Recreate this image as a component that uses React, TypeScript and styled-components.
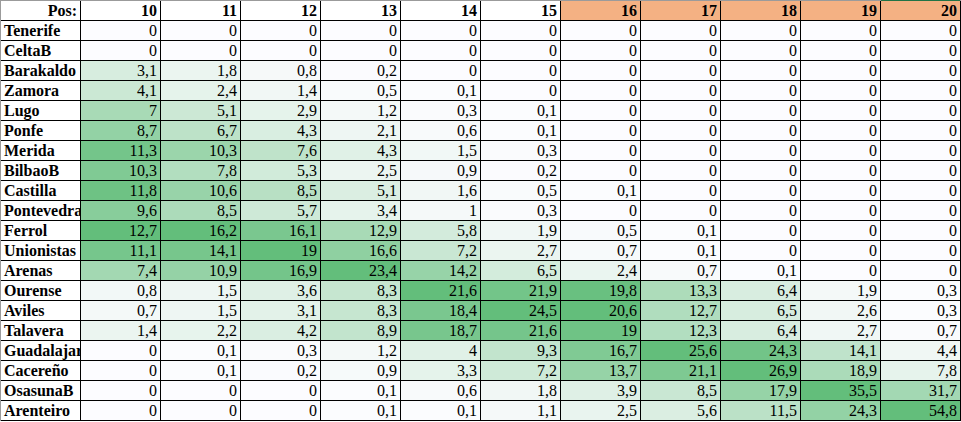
import React from "react";
import styled, { createGlobalStyle } from "styled-components";

const GlobalStyle = createGlobalStyle`
  html, body {
    margin: 0;
    padding: 0;
    background: #ffffff;
  }
  body {
    font-family: "Liberation Serif", "Times New Roman", serif;
  }
`;

const Sheet = styled.div`
  display: grid;
  grid-template-columns: repeat(12, 79px);
  grid-auto-rows: 19px;
  gap: 1px;
  width: max-content;
  background: #000000;
  border-top: 1px solid #9b9b9b;
  border-left: 1px solid #9b9b9b;
  padding: 0 1px 1px 0;
  font-family: "Liberation Serif", "Times New Roman", serif;
  font-size: 16px;
  line-height: 19px;
  color: #000000;
`;

const Cell = styled.div`
  overflow: hidden;
  white-space: nowrap;
  box-sizing: border-box;
`;

const HeadCell = styled(Cell)<{ $hot?: boolean; $active?: boolean }>`
  background: ${(p) => (p.$hot ? "#f4b183" : "#ffffff")};
  font-weight: bold;
  text-align: right;
  padding-right: 3px;
  box-shadow: ${(p) => (p.$active ? "0 -1px 0 #217346" : "none")};
`;

const NameCell = styled(Cell)`
  background: #ffffff;
  font-weight: bold;
  text-align: left;
  padding-left: 3px;
  text-overflow: clip;
`;

const ValueCell = styled(Cell)<{ $bg: string }>`
  background: ${(p) => p.$bg};
  text-align: right;
  padding-right: 3px;
`;

const positions = [10, 11, 12, 13, 14, 15, 16, 17, 18, 19, 20];

const rows: [string, number[]][] = [
  ["Tenerife", [0, 0, 0, 0, 0, 0, 0, 0, 0, 0, 0]],
  ["CeltaB", [0, 0, 0, 0, 0, 0, 0, 0, 0, 0, 0]],
  ["Barakaldo", [3.1, 1.8, 0.8, 0.2, 0, 0, 0, 0, 0, 0, 0]],
  ["Zamora", [4.1, 2.4, 1.4, 0.5, 0.1, 0, 0, 0, 0, 0, 0]],
  ["Lugo", [7, 5.1, 2.9, 1.2, 0.3, 0.1, 0, 0, 0, 0, 0]],
  ["Ponfe", [8.7, 6.7, 4.3, 2.1, 0.6, 0.1, 0, 0, 0, 0, 0]],
  ["Merida", [11.3, 10.3, 7.6, 4.3, 1.5, 0.3, 0, 0, 0, 0, 0]],
  ["BilbaoB", [10.3, 7.8, 5.3, 2.5, 0.9, 0.2, 0, 0, 0, 0, 0]],
  ["Castilla", [11.8, 10.6, 8.5, 5.1, 1.6, 0.5, 0.1, 0, 0, 0, 0]],
  ["Pontevedra", [9.6, 8.5, 5.7, 3.4, 1, 0.3, 0, 0, 0, 0, 0]],
  ["Ferrol", [12.7, 16.2, 16.1, 12.9, 5.8, 1.9, 0.5, 0.1, 0, 0, 0]],
  ["Unionistas", [11.1, 14.1, 19, 16.6, 7.2, 2.7, 0.7, 0.1, 0, 0, 0]],
  ["Arenas", [7.4, 10.9, 16.9, 23.4, 14.2, 6.5, 2.4, 0.7, 0.1, 0, 0]],
  ["Ourense", [0.8, 1.5, 3.6, 8.3, 21.6, 21.9, 19.8, 13.3, 6.4, 1.9, 0.3]],
  ["Aviles", [0.7, 1.5, 3.1, 8.3, 18.4, 24.5, 20.6, 12.7, 6.5, 2.6, 0.3]],
  ["Talavera", [1.4, 2.2, 4.2, 8.9, 18.7, 21.6, 19, 12.3, 6.4, 2.7, 0.7]],
  ["Guadalajara", [0, 0.1, 0.3, 1.2, 4, 9.3, 16.7, 25.6, 24.3, 14.1, 4.4]],
  ["Cacereño", [0, 0.1, 0.2, 0.9, 3.3, 7.2, 13.7, 21.1, 26.9, 18.9, 7.8]],
  ["OsasunaB", [0, 0, 0, 0.1, 0.6, 1.8, 3.9, 8.5, 17.9, 35.5, 31.7]],
  ["Arenteiro", [0, 0, 0, 0.1, 0.1, 1.1, 2.5, 5.6, 11.5, 24.3, 54.8]],
];

const LOW = [252, 252, 255];
const HIGH = [99, 190, 123];

const colMax = positions.map((_, c) => Math.max(...rows.map((r) => r[1][c])));
const colMin = positions.map((_, c) => Math.min(...rows.map((r) => r[1][c])));

function scale(v: number, c: number): string {
  const span = colMax[c] - colMin[c];
  const t = span > 0 ? (v - colMin[c]) / span : 0;
  const ch = LOW.map((l, i) => Math.round(l + (HIGH[i] - l) * t));
  return `rgb(${ch[0]}, ${ch[1]}, ${ch[2]})`;
}

const fmt = (v: number) => String(v).replace(".", ",");

export default function App() {
  return (
    <>
      <GlobalStyle />
      <Sheet>
        <HeadCell>Pos:</HeadCell>
        {positions.map((p) => (
          <HeadCell key={p} $hot={p >= 16} $active={p === 20}>
            {p}
          </HeadCell>
        ))}
        {rows.map(([name, vals]) => (
          <React.Fragment key={name}>
            <NameCell>{name}</NameCell>
            {vals.map((v, c) => (
              <ValueCell key={c} $bg={scale(v, c)}>
                {fmt(v)}
              </ValueCell>
            ))}
          </React.Fragment>
        ))}
      </Sheet>
    </>
  );
}
